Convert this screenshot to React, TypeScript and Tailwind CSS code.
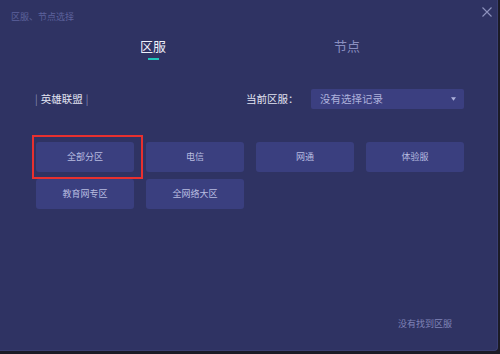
import { useState } from "react";

const zones = ["全部分区", "电信", "网通", "体验服", "教育网专区", "全网络大区"];

export default function App() {
  const [tab, setTab] = useState<"zone" | "node">("zone");

  return (
    <div
      className="w-[500px] h-[354px] bg-[#1b1b26] overflow-hidden"
      style={{ fontFamily: '"Noto Sans CJK SC", "Noto Sans", sans-serif' }}
    >
      <div className="relative w-[498px] h-[351px] bg-[#2f3363] rounded-br-[4px] border-r border-b border-[#3a3e72] flex flex-col">
        <div className="pl-[11px] pt-[11px] text-[9px] leading-[11px] text-[#5d629c]">
          区服、节点选择
        </div>
        <button className="absolute right-[5px] top-[7px] w-[10px] h-[10px] text-[#8e92bd]">
          <svg viewBox="0 0 10 10" className="w-full h-full" stroke="currentColor" strokeWidth="1.1">
            <path d="M0.5 0.5L9.5 9.5M9.5 0.5L0.5 9.5" />
          </svg>
        </button>

        <div className="flex mt-[16px] h-[24px]">
          <div className="w-[306px] flex flex-col items-center">
            <button
              onClick={() => setTab("zone")}
              className={`text-[13px] leading-[16px] ${tab === "zone" ? "text-[#eef0fa]" : "text-[#8a8fc0]"}`}
            >
              区服
            </button>
            {tab === "zone" && <div className="mt-[4px] w-[11px] h-[2px] bg-[#1fc8bd]" />}
          </div>
          <div className="flex-1 flex flex-col items-start pl-[28px]">
            <button
              onClick={() => setTab("node")}
              className={`text-[13px] leading-[16px] ${tab === "node" ? "text-[#eef0fa]" : "text-[#8a8fc0]"}`}
            >
              节点
            </button>
          </div>
        </div>

        <div className="flex items-center mt-[27px] h-[20px]">
          <div className="ml-[35px] w-[211px] text-[10.5px] text-[#e2e4f2] flex items-center gap-[3px]">
            <span className="text-[#a8acd4] font-light">|</span>
            <span>英雄联盟</span>
            <span className="text-[#a8acd4] font-light">|</span>
          </div>
          <div className="w-[65px] text-[10.5px] text-[#e2e4f2]">当前区服：</div>
          <div className="w-[153px] h-[20px] rounded-[2px] bg-[#3b3f80] flex items-center pl-[9px] pr-[8px] text-[10.5px] text-[#aeb2dc]">
            <span className="flex-1">没有选择记录</span>
            <svg viewBox="0 0 6 4" className="w-[5px] h-[4px]" fill="#aeb2dc">
              <path d="M0 0H6L3 4Z" />
            </svg>
          </div>
        </div>

        <div className="ml-[36px] mt-[32px] grid grid-cols-[repeat(4,98px)] gap-x-[12px] gap-y-[6px]">
          {zones.map((z, i) => (
            <div key={z} className="relative">
              <button className="w-[98px] h-[30px] rounded-[3px] bg-[#3a3f7f] text-[9px] text-[#b8bce0]">
                {z}
              </button>
              {i === 0 && (
                <div className="absolute -left-[4px] -top-[6px] w-[111px] h-[44px] border-2 border-[#e8302f] pointer-events-none" />
              )}
            </div>
          ))}
        </div>

        <div className="mt-auto mb-[21px] ml-[398px] text-[9px] leading-[11px] text-[#8084b8]">没有找到区服</div>
      </div>
    </div>
  );
}
